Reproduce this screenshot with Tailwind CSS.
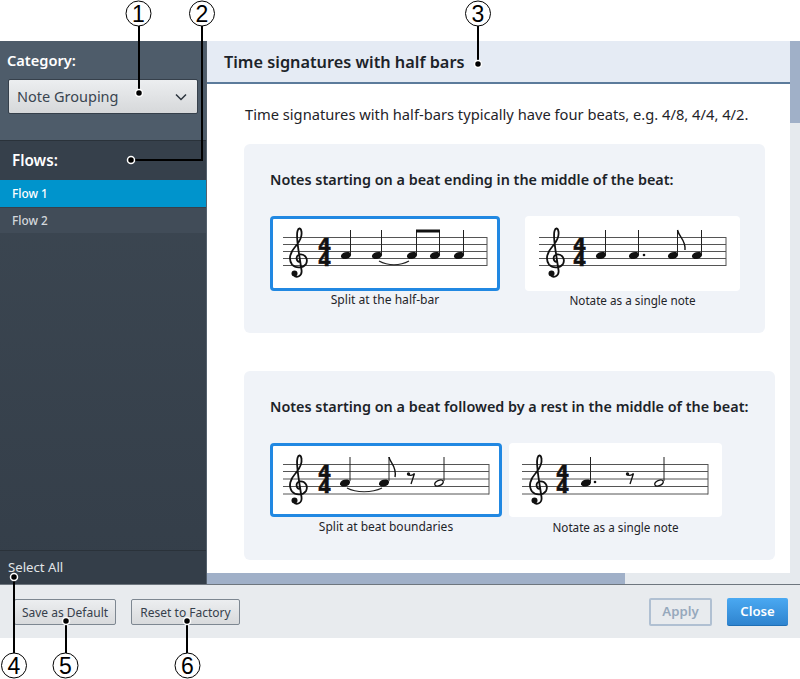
<!DOCTYPE html>
<html lang="en">
<head>
  <meta charset="UTF-8">
  <title>Engrave Options - Note Grouping</title>
  <script src="https://cdn.jsdelivr.net/npm/@tailwindcss/browser@4"></script>
</head>
<body class="bg-white font-['Noto_Sans',sans-serif]">

  <!-- shared notation shapes -->
  <svg class="absolute w-0 h-0">
    <defs>
      <symbol id="clef" overflow="visible">
        <path d="M11.500 25C7 25 6 19 10.500 17.500C16 16.500 19.500 22 17 27C14.500 31 7 32 3 27.500C-1 22 1.500 15 6 10C9 6 13.500 2 12.500-5C12-9.500 9.500-9.500 8.500-6C7-1 8.500 6 10.500 20L12.500 33C13.500 39.500 7 41.500 5 38" fill="none" stroke="#111" stroke-width="1.800"/>
        <circle cx="5.500" cy="36.500" r="3" fill="#111"/>
      </symbol>
      <symbol id="timesig" overflow="visible">
        <text x="0" y="14.500" font-size="19" font-weight="700" font-family="DejaVu Sans" fill="#111" stroke="#111" stroke-width="0.500">4</text>
        <text x="0" y="29" font-size="19" font-weight="700" font-family="DejaVu Sans" fill="#111" stroke="#111" stroke-width="0.500">4</text>
      </symbol>
      <symbol id="head" overflow="visible">
        <ellipse cx="0" cy="0" rx="5.200" ry="3.400" transform="rotate(-18)" fill="#111"/>
      </symbol>
      <symbol id="halfhead" overflow="visible">
        <ellipse cx="0" cy="0" rx="4.500" ry="2.600" transform="rotate(-22)" fill="none" stroke="#111" stroke-width="1.300"/>
      </symbol>
      <symbol id="rest" overflow="visible">
        <path d="M-3 -3C-1.500 -1 1 -1 3.500 -3.500L0 7" fill="none" stroke="#111" stroke-width="1.300"/>
        <circle cx="-2.500" cy="-3" r="1.700" fill="#111"/>
      </symbol>
    </defs>
  </svg>

  <div class="pt-[41px] h-[679px] w-[800px] overflow-hidden">
    <div class="h-[597px] flex flex-col">
      <div class="flex h-[543px]">

        <!-- Sidebar -->
        <aside class="w-[207px] shrink-0 flex flex-col border-r border-[#55616d] bg-gradient-to-b from-[#3e4954] to-[#343e49]">
          <div class="h-[99px] bg-[#4e5c6a] pl-[7px] pt-[9px]">
            <div class="text-white text-[14.600px] font-semibold leading-5">Category:</div>
            <div class="mt-[9px] ml-px h-[35px] w-[190px] rounded-[2px] border border-[#36404b] bg-gradient-to-b from-[#eceef0] to-[#d6d8da] flex items-center justify-between pl-2 pr-2.5">
              <span class="pt-px text-[14.500px] text-[#3a4550]">Note Grouping</span>
              <svg width="12" height="8" viewBox="0 0 12 8"><path d="M1 1.500L6 6.500L11 1.500" fill="none" stroke="#2b343d" stroke-width="1.500"/></svg>
            </div>
          </div>
          <div class="h-[40px] bg-[#36404b] border-t border-[#2a323a] pl-3 flex items-center text-white text-[15.200px] font-semibold">Flows:</div>
          <div class="h-[27px] bg-[#0094cc] pl-3 flex items-center text-white text-[11.800px] font-medium">Flow 1</div>
          <div class="h-[26px] bg-[#414c58] border-t border-[#36404b] pl-3 flex items-center text-[#d4d8dc] text-[11.800px] font-medium">Flow 2</div>
          <div class="flex-1"></div>
          <div class="h-[34px] bg-[#343e49] border-t border-[#2a323a] pl-2 pt-px flex items-center text-[#e2e5e8] text-[13.200px]">Select All</div>
        </aside>

        <!-- Main pane -->
        <div class="flex-1 flex min-w-0">
          <div class="w-[583px] flex flex-col">
            <header class="h-[43px] shrink-0 bg-[#e5ebf4] border-b-2 border-[#5c7b9b] pl-[17px] pt-[9px] text-[16.300px] font-semibold leading-6 text-[#1c2329]">Time signatures with half bars</header>
            <div class="flex-1 bg-white pl-[37px] overflow-hidden">
              <p class="pl-px pt-[20px] h-[60px] text-[14.700px] leading-5 text-[#1f2429]">Time signatures with half-bars typically have four beats, e.g. 4/8, 4/4, 4/2.</p>

              <section class="w-[521px] h-[189px] rounded-md bg-[#f0f3f8] pl-[26px] pt-[26px]">
                <h3 class="h-[46px] text-[14.380px] leading-5 font-semibold text-[#1c2329]">Notes starting on a beat ending in the middle of the beat:</h3>
                <div class="flex">
                  <figure class="w-[230px]">
                    <div class="h-[75px] rounded-[4px] border-[3px] border-[#2188e2] bg-white">
                      <svg class="w-full h-full" viewBox="273 219 224 69">
                        <path d="M283 237.500H487M283 244.500H487M283 251.500H487M283 258.500H487M283 265.500H487M487 237V266" stroke="#555" stroke-width="1"/>
                        <use href="#clef" x="289" y="237"/>
                        <use href="#timesig" x="318" y="237"/>
                        <use href="#head" x="346" y="255.500"/><use href="#head" x="377" y="255.500"/><use href="#head" x="412" y="255.500"/><use href="#head" x="435" y="255.500"/><use href="#head" x="459" y="255.500"/>
                        <path d="M350.500 254V230M381.500 254V230M416.500 254V231M439.500 254V231M463.500 254V230" stroke="#222" stroke-width="1"/>
                        <path d="M416 231H440" stroke="#111" stroke-width="3"/>
                        <path d="M379 261C388 266 400 266 409 261" fill="none" stroke="#222" stroke-width="1.200"/>
                      </svg>
                    </div>
                    <figcaption class="text-center text-[12.100px] leading-4 pt-px text-[#1f2429]">Split at the half-bar</figcaption>
                  </figure>
                  <figure class="w-[215px] ml-[25px]">
                    <div class="h-[75px] rounded-[4px] bg-white">
                      <svg class="w-full h-full" viewBox="525 216 215 75">
                        <path d="M539 237.500H726M539 244.500H726M539 251.500H726M539 258.500H726M539 265.500H726M726 237V266" stroke="#555" stroke-width="1"/>
                        <use href="#clef" x="546" y="237"/>
                        <use href="#timesig" x="573" y="237"/>
                        <use href="#head" x="601" y="255.500"/><use href="#head" x="634" y="255.500"/><use href="#head" x="673" y="255.500"/><use href="#head" x="697" y="255.500"/>
                        <circle cx="644" cy="255" r="1.300" fill="#111"/>
                        <path d="M605.500 254V230M638.500 254V230M677.500 254V230M701.500 254V230" stroke="#222" stroke-width="1"/>
                        <path d="M677.500 230C679 237 686 240 685 250" fill="none" stroke="#111" stroke-width="1.400"/>
                      </svg>
                    </div>
                    <figcaption class="text-center text-[11.700px] leading-4 pt-px text-[#1f2429]">Notate as a single note</figcaption>
                  </figure>
                </div>
              </section>

              <section class="mt-[38px] w-[531px] h-[189px] rounded-md bg-[#f0f3f8] pl-[26px] pt-[26px]">
                <h3 class="h-[46px] text-[14.380px] leading-5 font-semibold text-[#1c2329]">Notes starting on a beat followed by a rest in the middle of the beat:</h3>
                <div class="flex">
                  <figure class="w-[232px]">
                    <div class="h-[74px] rounded-[4px] border-[3px] border-[#2188e2] bg-white">
                      <svg class="w-full h-full" viewBox="273 446 226 68">
                        <path d="M283 464.500H489M283 471.500H489M283 479H489M283 486.500H489M283 494H489M489 464V494.500" stroke="#555" stroke-width="1"/>
                        <use href="#clef" x="289" y="464"/>
                        <use href="#timesig" x="318" y="464"/>
                        <use href="#head" x="345" y="483"/><use href="#head" x="384" y="483"/>
                        <use href="#rest" x="411" y="477"/>
                        <use href="#halfhead" x="439" y="483"/>
                        <path d="M350 481V457M389 481V457M444 481V457" stroke="#222" stroke-width="1"/>
                        <path d="M389 457C390 463 397 466 395 477" fill="none" stroke="#111" stroke-width="1.400"/>
                        <path d="M347 488C356 493 372 493 382 488" fill="none" stroke="#222" stroke-width="1.200"/>
                      </svg>
                    </div>
                    <figcaption class="text-center text-[12px] leading-4 pt-[2px] text-[#1f2429]">Split at beat boundaries</figcaption>
                  </figure>
                  <figure class="w-[213px] ml-[7px]">
                    <div class="h-[74px] rounded-[4px] bg-white">
                      <svg class="w-full h-full" viewBox="509 443 213 74">
                        <path d="M522 464.500H708M522 471.500H708M522 479H708M522 486.500H708M522 494H708M708 464V494.500" stroke="#555" stroke-width="1"/>
                        <use href="#clef" x="529" y="464"/>
                        <use href="#timesig" x="556" y="464"/>
                        <use href="#head" x="586" y="483"/>
                        <circle cx="595" cy="482" r="1.300" fill="#111"/>
                        <use href="#rest" x="630" y="477"/>
                        <use href="#halfhead" x="659" y="483"/>
                        <path d="M590.500 481V457M664 481V457" stroke="#222" stroke-width="1"/>
                      </svg>
                    </div>
                    <figcaption class="text-center text-[11.700px] leading-4 pt-[2px] text-[#1f2429]">Notate as a single note</figcaption>
                  </figure>
                </div>
              </section>
            </div>
            <!-- horizontal scrollbar -->
            <div class="h-[11px] shrink-0 bg-[#e6eaee]">
              <div class="w-[418px] h-full bg-[#a0b0c8]"></div>
            </div>
          </div>
          <!-- vertical scrollbar -->
          <div class="w-[10px] bg-[#e6eaee]">
            <div class="h-[82px] bg-[#a0b0c8]"></div>
          </div>
        </div>
      </div>

      <!-- Footer buttons -->
      <footer class="h-[54px] bg-[#e8ebee] border-t border-[#6e767e] flex items-start pt-[14px] pl-[14px] pr-3">
        <button class="w-[102px] h-[26px] pt-px rounded-[2px] border border-[#7d8791] bg-gradient-to-b from-[#eceef0] to-[#d8dadc] text-[12px] text-[#36404b]">Save as Default</button>
        <button class="ml-[15px] w-[109px] h-[26px] pt-px rounded-[2px] border border-[#7d8791] bg-gradient-to-b from-[#eceef0] to-[#d8dadc] text-[12px] text-[#36404b]">Reset to Factory</button>
        <div class="flex-1"></div>
        <button class="-mt-[1px] w-[63px] h-[28px] rounded-[2px] border-2 border-[#b0c0d2] text-[13.200px] font-semibold text-[#96a8bc]">Apply</button>
        <button class="-mt-[1px] ml-[15px] w-[61px] h-[28px] rounded-[2px] border-b border-[#1f6fb5] bg-gradient-to-b from-[#4aa9f2] to-[#2f84cf] text-[13.200px] font-semibold text-white">Close</button>
      </footer>
    </div>
  </div>

  <!-- Numbered callouts over the dialog -->
  <svg class="absolute left-0 top-0 w-[800px] h-[679px] pointer-events-none" viewBox="0 0 800 679">
    <g fill="none" stroke="#000" stroke-width="2">
      <path d="M139 26V93"/>
      <path d="M202 26V160H131"/>
      <path d="M478 26V64"/>
      <path d="M14 654V577"/>
      <path d="M66 654V621"/>
      <path d="M187 654V621"/>
    </g>
    <g fill="#000" stroke="#fff" stroke-width="1.500">
      <circle cx="139" cy="93" r="3.500"/>
      <circle cx="131" cy="160" r="3.500"/>
      <circle cx="478" cy="64" r="3.500"/>
      <circle cx="14" cy="577" r="3.500"/>
      <circle cx="66" cy="621" r="3.500"/>
      <circle cx="187" cy="621" r="3.500"/>
    </g>
    <g fill="#fff" stroke="#000" stroke-width="1">
      <circle cx="138.500" cy="13.500" r="12.500"/>
      <circle cx="202" cy="13.500" r="12.500"/>
      <circle cx="478" cy="13.500" r="12.500"/>
      <circle cx="14" cy="665.500" r="12.500"/>
      <circle cx="65.500" cy="665.500" r="12.500"/>
      <circle cx="187.500" cy="665.500" r="12.500"/>
    </g>
    <g fill="#000" font-family="Liberation Sans" font-size="23" text-anchor="middle">
      <text x="138.500" y="22">1</text>
      <text x="202" y="22">2</text>
      <text x="478" y="22">3</text>
      <text x="14" y="674">4</text>
      <text x="65.500" y="674">5</text>
      <text x="187.500" y="674">6</text>
    </g>
  </svg>
</body>
</html>
